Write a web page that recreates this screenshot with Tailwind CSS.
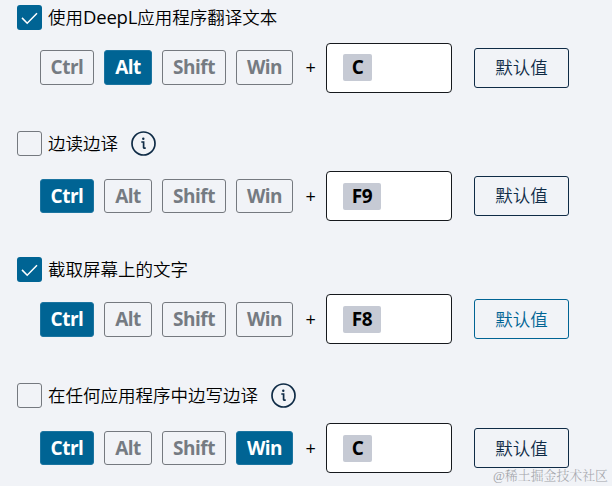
<!DOCTYPE html>
<html lang="zh-CN">
<head>
  <meta charset="UTF-8">
  <title>快捷键设置</title>
  <script src="https://cdn.jsdelivr.net/npm/@tailwindcss/browser@4"></script>
</head>
<body class="h-[486px] overflow-hidden bg-[#f1f3f7] font-['Open_Sans','Noto_Sans_CJK_SC',sans-serif] text-black">
  <main class="relative h-[486px] pl-[17px] pt-[5px]">

    <!-- Translate text -->
    <section class="h-[126px]">
      <div class="flex h-[25px] items-center">
        <span class="flex size-[25px] items-center justify-center rounded-[3px] bg-[#006494]">
          <svg class="size-[25px]" viewBox="0 0 25 25" fill="none" stroke="white" stroke-width="1.5"><path d="M5 12.9l5.2 5.3L20 8.2"/></svg>
        </span>
        <span class="ml-1.5 whitespace-nowrap pb-px text-[17.5px] font-[350] leading-[25px]">使用<span class="text-[18.5px] font-normal tracking-[-0.2px]">DeepL</span>应用程序翻译文本</span>
      </div>
      <div class="ml-[23px] mt-[13px] flex h-[49px] items-center text-[19px] font-bold tracking-[-0.5px]">
        <span class="flex h-[35px] w-[54px] items-center justify-center rounded-[3px] border border-[#75797f] pb-px text-[#757b82]">Ctrl</span>
        <span class="ml-2.5 flex h-[35px] w-12 items-center justify-center rounded-[3px] border border-[#1b74a0] bg-[#006494] pb-px text-white">Alt</span>
        <span class="ml-2.5 flex h-[35px] w-16 items-center justify-center rounded-[3px] border border-[#75797f] pb-px text-[#757b82]">Shift</span>
        <span class="ml-2.5 flex h-[35px] w-[57px] items-center justify-center rounded-[3px] border border-[#75797f] pb-px text-[#757b82]">Win</span>
        <span class="w-[33px] pb-px pl-0.5 text-center text-lg font-normal">+</span>
        <span class="flex h-[50px] w-[126px] items-center rounded-[4px] border border-[#16191d] bg-white pl-4">
          <span class="flex h-[27px] w-[29px] items-center justify-center rounded-[2px] bg-[#c6cad4]">C</span>
        </span>
        <button class="ml-[22px] h-10 w-[95px] rounded-[3px] border border-[#0f2b46] text-[17.5px] font-[350] tracking-normal text-[#0f2b46]">默认值</button>
      </div>
    </section>

    <!-- Translate while reading -->
    <section class="h-[126px]">
      <div class="flex h-[25px] items-center">
        <span class="size-[25px] rounded-[3px] border border-[#75797f]"></span>
        <span class="ml-1.5 whitespace-nowrap text-[17.5px] font-[350] leading-[25px]">边读边译</span>
        <svg class="ml-[13px] size-[25px]" viewBox="0 0 25 25" fill="none" stroke="#0f2b46" stroke-width="1.7"><circle cx="12.5" cy="12.5" r="11.5"/><path d="M10.3 11h2.3v5.7q0 .7 2.2.3"/><circle cx="12.3" cy="7.7" r="1.2" fill="#0f2b46" stroke="none"/></svg>
      </div>
      <div class="ml-[23px] mt-[15px] flex h-[50px] items-center text-[19px] font-bold tracking-[-0.5px]">
        <span class="flex h-[34px] w-[54px] items-center justify-center rounded-[3px] border border-[#1b74a0] bg-[#006494] text-white">Ctrl</span>
        <span class="ml-2.5 flex h-[34px] w-12 items-center justify-center rounded-[3px] border border-[#75797f] text-[#757b82]">Alt</span>
        <span class="ml-2.5 flex h-[34px] w-16 items-center justify-center rounded-[3px] border border-[#75797f] text-[#757b82]">Shift</span>
        <span class="ml-2.5 flex h-[34px] w-[57px] items-center justify-center rounded-[3px] border border-[#75797f] text-[#757b82]">Win</span>
        <span class="w-[33px] pl-0.5 text-center text-lg font-normal">+</span>
        <span class="flex h-[50px] w-[126px] items-center rounded-[4px] border border-[#16191d] bg-white pl-4">
          <span class="flex h-[27px] w-[38px] items-center justify-center rounded-[2px] bg-[#c6cad4]">F9</span>
        </span>
        <button class="ml-[22px] h-10 w-[95px] rounded-[3px] border border-[#0f2b46] pb-px text-[17.5px] font-[350] tracking-normal text-[#0f2b46]">默认值</button>
      </div>
    </section>

    <!-- Capture text on screen -->
    <section class="h-[126px]">
      <div class="flex h-[25px] items-center">
        <span class="flex size-[25px] items-center justify-center rounded-[3px] bg-[#006494]">
          <svg class="size-[25px]" viewBox="0 0 25 25" fill="none" stroke="white" stroke-width="1.5"><path d="M5 12.9l5.2 5.3L20 8.2"/></svg>
        </span>
        <span class="ml-1.5 whitespace-nowrap text-[17.5px] font-[350] leading-[25px]">截取屏幕上的文字</span>
      </div>
      <div class="ml-[23px] mt-3 flex h-[50px] items-center text-[19px] font-bold tracking-[-0.5px]">
        <span class="flex h-[35px] w-[54px] items-center justify-center rounded-[3px] border border-[#1b74a0] bg-[#006494] text-white">Ctrl</span>
        <span class="ml-2.5 flex h-[35px] w-12 items-center justify-center rounded-[3px] border border-[#75797f] text-[#757b82]">Alt</span>
        <span class="ml-2.5 flex h-[35px] w-16 items-center justify-center rounded-[3px] border border-[#75797f] text-[#757b82]">Shift</span>
        <span class="ml-2.5 flex h-[35px] w-[57px] items-center justify-center rounded-[3px] border border-[#75797f] text-[#757b82]">Win</span>
        <span class="w-[33px] pl-0.5 text-center text-lg font-normal">+</span>
        <span class="flex h-[50px] w-[126px] items-center rounded-[4px] border border-[#16191d] bg-white pl-4">
          <span class="flex h-[27px] w-[38px] items-center justify-center rounded-[2px] bg-[#c6cad4]">F8</span>
        </span>
        <button class="ml-[22px] h-10 w-[95px] rounded-[3px] border border-[#006494] text-[17.5px] font-[350] tracking-normal text-[#006494]">默认值</button>
      </div>
    </section>

    <!-- Translate while writing -->
    <section>
      <div class="flex h-[25px] items-center">
        <span class="size-[25px] rounded-[3px] border border-[#75797f]"></span>
        <span class="ml-1.5 whitespace-nowrap text-[17.5px] font-[350] leading-[25px]">在任何应用程序中边写边译</span>
        <svg class="ml-[13px] size-[25px]" viewBox="0 0 25 25" fill="none" stroke="#0f2b46" stroke-width="1.7"><circle cx="12.5" cy="12.5" r="11.5"/><path d="M10.3 11h2.3v5.7q0 .7 2.2.3"/><circle cx="12.3" cy="7.7" r="1.2" fill="#0f2b46" stroke="none"/></svg>
      </div>
      <div class="ml-[23px] mt-[15px] flex h-[50px] items-center text-[19px] font-bold tracking-[-0.5px]">
        <span class="flex h-[34px] w-[54px] items-center justify-center rounded-[3px] border border-[#1b74a0] bg-[#006494] text-white">Ctrl</span>
        <span class="ml-2.5 flex h-[34px] w-12 items-center justify-center rounded-[3px] border border-[#75797f] text-[#757b82]">Alt</span>
        <span class="ml-2.5 flex h-[34px] w-16 items-center justify-center rounded-[3px] border border-[#75797f] text-[#757b82]">Shift</span>
        <span class="ml-2.5 flex h-[34px] w-[57px] items-center justify-center rounded-[3px] border border-[#1b74a0] bg-[#006494] text-white">Win</span>
        <span class="w-[33px] pl-0.5 text-center text-lg font-normal">+</span>
        <span class="flex h-[50px] w-[126px] items-center rounded-[4px] border border-[#16191d] bg-white pl-4">
          <span class="flex h-[27px] w-[29px] items-center justify-center rounded-[2px] bg-[#c6cad4]">C</span>
        </span>
        <button class="ml-[22px] h-10 w-[95px] rounded-[3px] border border-[#0f2b46] text-[17.5px] font-[350] tracking-normal text-[#0f2b46]">默认值</button>
      </div>
    </section>

    <!-- Watermark -->
    <div class="absolute bottom-0 right-[4px] whitespace-nowrap font-['Liberation_Serif','Noto_Serif_CJK_SC','Noto_Sans_CJK_SC',serif] text-[12.9px] font-light leading-5 text-[#a3a5aa]">@稀土掘金技术社区</div>
  </main>
</body>
</html>
